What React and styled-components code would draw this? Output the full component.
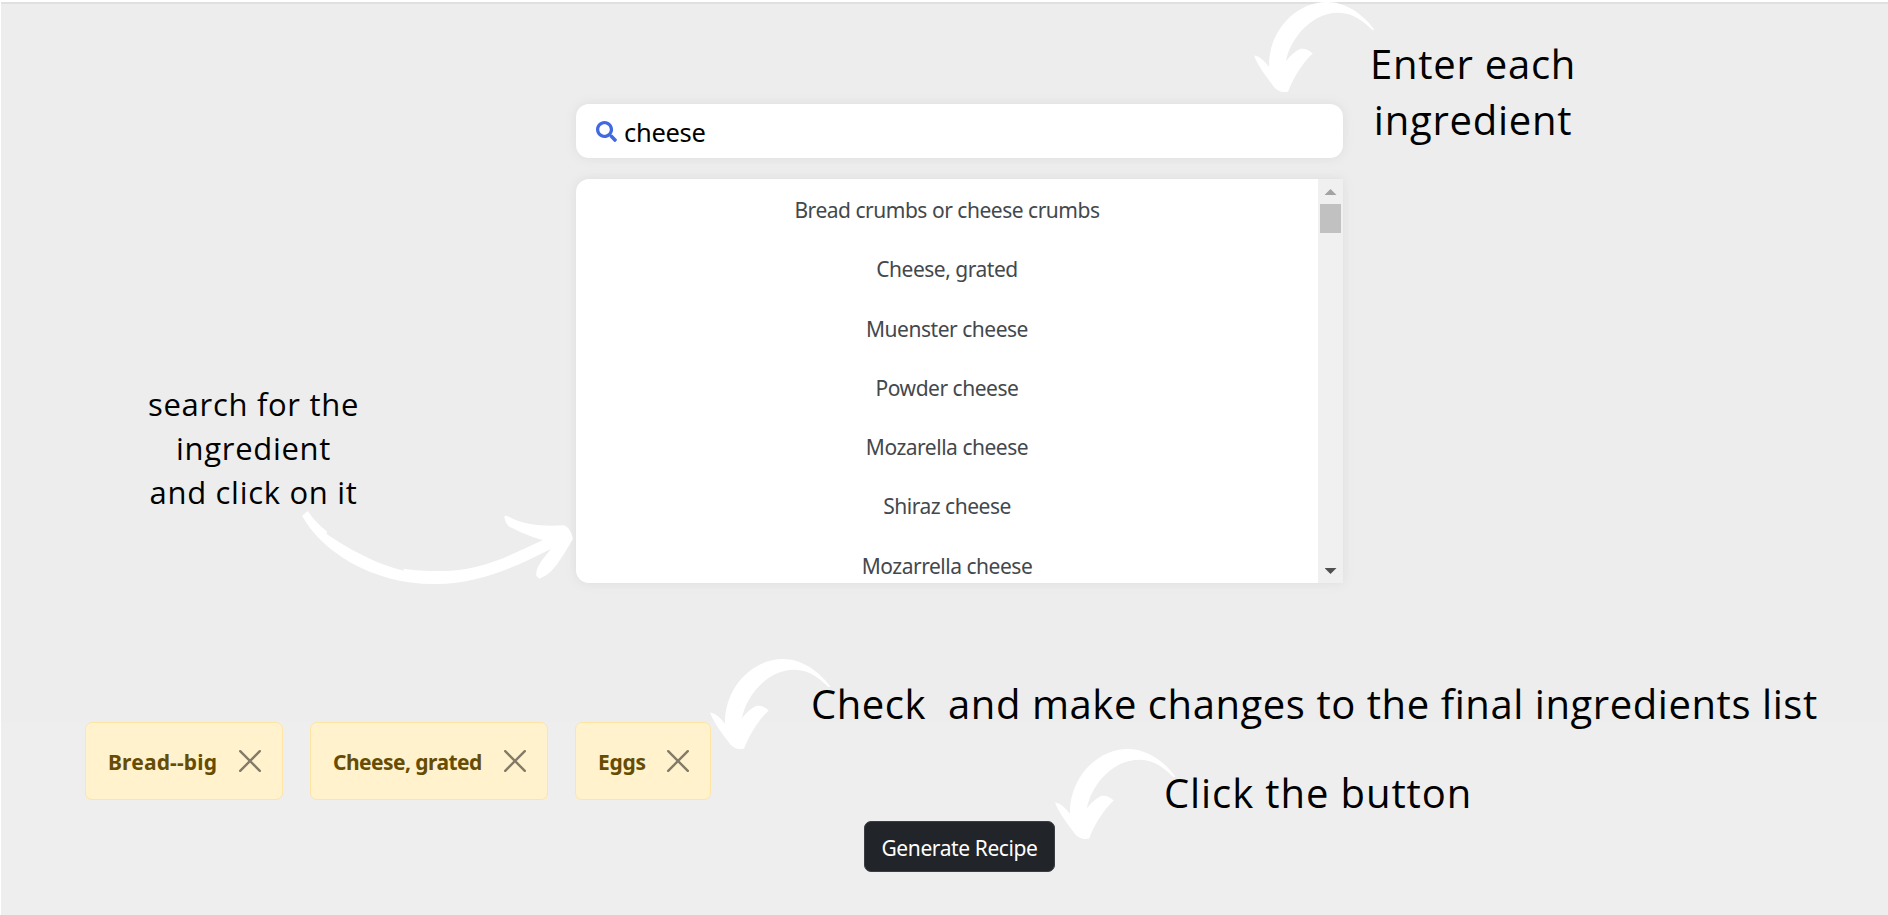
import React from "react";
import styled, { createGlobalStyle } from "styled-components";
import { FaSearch } from "react-icons/fa";

const GlobalStyle = createGlobalStyle`
  * { box-sizing: border-box; }
  body { margin: 0; background: #fff; overflow: hidden; }
  button { font: inherit; }
`;

const uiFont = `"Noto Sans", "Open Sans", sans-serif`;
const noteFont = `"Open Sans", "Noto Sans", sans-serif`;

const Page = styled.main`
  width: 1888px;
  height: 915px;
  border-top: 2px solid #fff;
  border-left: 1px solid #fff;
  background: linear-gradient(#ededed 720px, #eeeeee 720px);
  font-family: ${uiFont};
  overflow: hidden;
`;

const SearchSection = styled.section`
  display: grid;
  grid-template-columns: 575px 767px 1fr;
  height: 651px;
  border-top: 2px solid #e0e0e0;
`;

const SideNote = styled.aside`
  display: flex;
  flex-direction: column;
  align-items: flex-start;
  padding: ${(p) => p.$padding};
`;

const Note = styled.p`
  position: relative;
  margin: ${(p) => p.$margin || 0};
  font-family: ${noteFont};
  font-size: ${(p) => p.$size}px;
  line-height: ${(p) => p.$line}px;
  letter-spacing: ${(p) => p.$spacing || 0}px;
  color: #000;
  text-align: center;
  white-space: pre;
`;

const ArrowSvg = styled.svg`
  position: absolute;
  left: ${(p) => p.$left}px;
  top: ${(p) => p.$top}px;
  fill: #fff;
`;

const SearchColumn = styled.div`
  display: flex;
  flex-direction: column;
  gap: 21px;
  padding-top: 100px;
`;

const SearchBar = styled.label`
  display: flex;
  align-items: center;
  height: 54px;
  padding: 0 20px;
  border-radius: 13px;
  background: #fff;
  box-shadow: 0 0 11px #ddd;
  color: #4169e1;
`;

const SearchInput = styled.input`
  flex: 1;
  margin: 1px 0 0 7px;
  padding: 0;
  border: 0;
  outline: 0;
  background: transparent;
  font-family: ${uiFont};
  font-size: 25.5px;
  letter-spacing: ${(p) => p.$spacing}px;
  color: #000;
`;

const ResultsPanel = styled.div`
  display: flex;
  height: 404px;
  border-radius: 13px 0 0 13px;
  background: #fff;
  box-shadow: 0 0 11px #ddd;
  overflow: hidden;
`;

const Results = styled.ul`
  flex: 1;
  margin: 0;
  padding: 2px 0 0;
  list-style: none;
`;

const Result = styled.li`
  height: 59.25px;
  line-height: 59.25px;
  font-size: 21px;
  letter-spacing: ${(p) => p.$spacing}px;
  color: #43484c;
  text-align: center;
`;

const Scrollbar = styled.div`
  display: flex;
  flex-direction: column;
  align-items: center;
  width: 25px;
  padding: 10px 0 9px;
  background: #f0f0f0;
`;

const ScrollArrow = styled.span`
  width: 12px;
  height: 6px;
  background: ${(p) => (p.$down ? "#505050" : "#a3a3a3")};
  clip-path: ${(p) =>
    p.$down ? "polygon(0 0, 100% 0, 50% 100%)" : "polygon(50% 0, 100% 100%, 0 100%)"};
`;

const ScrollThumb = styled.span`
  width: 21px;
  height: 29px;
  margin: 9px 0 auto;
  background: #c1c1c1;
`;

const SelectionSection = styled.section`
  display: flex;
  height: 168px;
`;

const ChipList = styled.div`
  display: flex;
  align-items: flex-start;
  width: 810px;
  padding: 69px 0 0 84px;
`;

const Chip = styled.div`
  display: flex;
  align-items: center;
  justify-content: space-between;
  width: ${(p) => p.$width}px;
  height: 78px;
  margin-right: 27px;
  padding: 0 21px 0 22px;
  border: 1px solid #ffe5a3;
  border-radius: 7px;
  background: #fff2cd;
  color: #664d03;
  font-size: 21px;
  font-weight: 700;
  letter-spacing: ${(p) => p.$spacing}px;
  white-space: nowrap;
`;

const ChipLabel = styled.span`
  padding-top: 2px;
`;

const RemoveButton = styled.button`
  display: flex;
  padding: 0;
  border: 0;
  background: none;
  color: #847b67;
`;

const NoteStack = styled.div`
  display: flex;
  flex-direction: column;
  align-items: flex-start;
  padding-top: 23px;
`;

const ActionRow = styled.section`
  padding-left: 863px;
`;

const GenerateButton = styled.button`
  display: block;
  width: 191px;
  height: 51px;
  padding: 2px 0 0;
  border: 1px solid #3a3e42;
  border-radius: 7px;
  background: #212529;
  color: #fff;
  font-size: 21px;
  letter-spacing: ${(p) => p.$spacing}px;
  white-space: nowrap;
`;

const HookArrow = ({ left, top }) => (
  <ArrowSvg $left={left} $top={top} width="120.5" height="90.5" viewBox="72 6 361 271">
    <path d="M432 88C400 45 350 6 290 6C200 6 115 90 117 200C105 185 90 168 72 166C85 200 110 230 128 255C140 272 155 277 174 275C185 245 210 195 248 160C235 148 222 143 210 147C190 157 178 170 168 184C175 130 235 38 325 38C370 38 400 65 425 88Q430 91 432 88Z" />
  </ArrowSvg>
);

const SweepArrow = ({ left, top }) => (
  <ArrowSvg $left={left} $top={top} width="271" height="73.3" viewBox="515 424 813 220">
    <path d="M532 424L515 438C570 540 720 643 910 643C1050 645 1160 588 1262 538C1245 560 1215 590 1218 618L1227 627C1270 612 1290 570 1328 508C1325 490 1315 470 1300 467C1240 472 1170 465 1130 438L1122 440C1125 460 1132 470 1145 475C1180 492 1205 503 1238 511C1150 550 1060 605 930 604C890 604 850 602 818 597L822 603C740 585 650 535 588 492L590 486C565 465 550 450 532 424Z" />
  </ArrowSvg>
);

const CloseIcon = () => (
  <svg width="22" height="22" viewBox="0 0 22 22" stroke="currentColor" strokeWidth="2.4" strokeLinecap="round">
    <path d="M1.2 1.2L20.8 20.8M20.8 1.2L1.2 20.8" />
  </svg>
);

const results = [
  "Bread crumbs or cheese crumbs",
  "Cheese, grated",
  "Muenster cheese",
  "Powder cheese",
  "Mozarella cheese",
  "Shiraz cheese",
  "Mozarrella cheese",
];

const chips = [
  { label: "Bread--big", width: 198, spacing: 0.15 },
  { label: "Cheese, grated", width: 238, spacing: -0.55 },
  { label: "Eggs", width: 136, spacing: -0.3 },
];

export default function App() {
  return (
    <>
      <GlobalStyle />
      <Page>
        <SearchSection>
          <SideNote $padding="378px 0 0 147px">
            <Note $size={31} $line={44} $spacing={0.7}>
              {"search for the\ningredient\nand click on it"}
              <SweepArrow left={154} top={129} />
            </Note>
          </SideNote>
          <SearchColumn>
            <SearchBar>
              <FaSearch size={21} />
              <SearchInput $spacing={-0.3} defaultValue="cheese" aria-label="Ingredient" />
            </SearchBar>
            <ResultsPanel>
              <Results>
                {results.map((name) => (
                  <Result key={name} $spacing={-0.48}>{name}</Result>
                ))}
              </Results>
              <Scrollbar>
                <ScrollArrow />
                <ScrollThumb />
                <ScrollArrow $down />
              </Scrollbar>
            </ResultsPanel>
          </SearchColumn>
          <SideNote $padding="32px 0 0 27px">
            <Note $size={40} $line={56} $spacing={0.75}>
              {"Enter each\ningredient"}
              <HookArrow left={-116} top={-34} />
            </Note>
          </SideNote>
        </SearchSection>
        <SelectionSection>
          <ChipList>
            {chips.map((chip) => (
              <Chip key={chip.label} $width={chip.width} $spacing={chip.spacing}>
                <ChipLabel>{chip.label}</ChipLabel>
                <RemoveButton aria-label="Remove">
                  <CloseIcon />
                </RemoveButton>
              </Chip>
            ))}
          </ChipList>
          <NoteStack>
            <Note $size={40} $line={56} $spacing={0.56}>
              {"Check  and make changes to the final ingredients list"}
              <HookArrow left={-101} top={-17} />
            </Note>
            <Note $size={40} $line={48} $margin="37px 0 0 353px" $spacing={0.9}>
              Click the button
              <HookArrow left={-109} top={-20} />
            </Note>
          </NoteStack>
        </SelectionSection>
        <ActionRow>
          <GenerateButton $spacing={-0.4}>Generate Recipe</GenerateButton>
        </ActionRow>
      </Page>
    </>
  );
}
